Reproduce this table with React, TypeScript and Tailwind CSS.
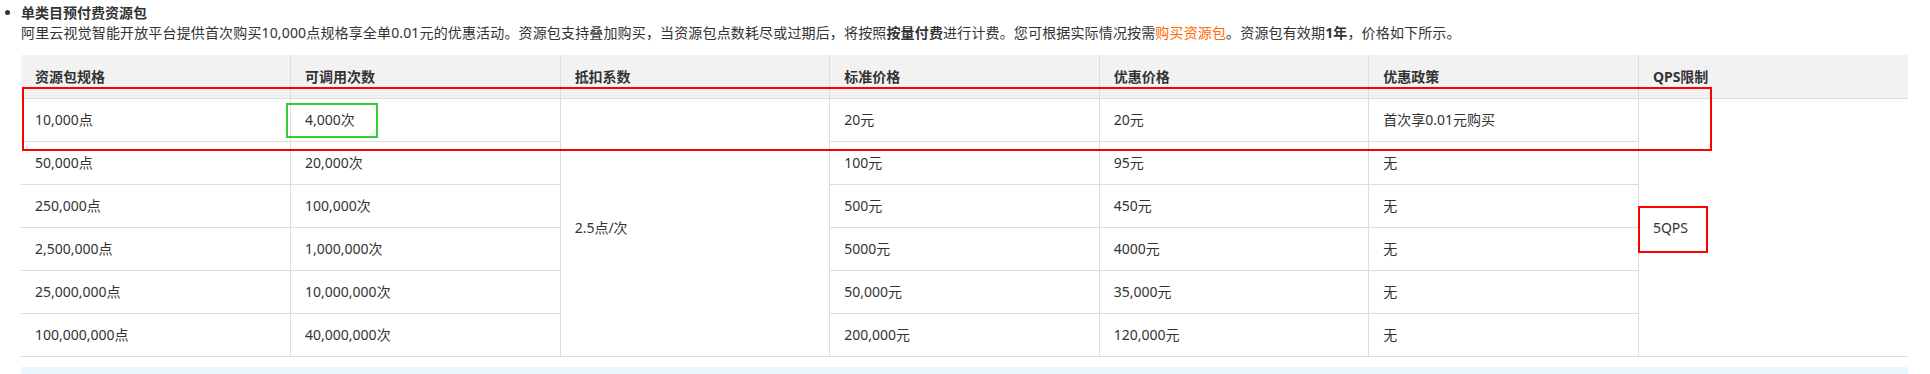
import React from 'react';

type Row = { spec: string; calls: string; price: string; deal: string; policy: string };

const rows: Row[] = [
  { spec: '10,000点', calls: '4,000次', price: '20元', deal: '20元', policy: '首次享0.01元购买' },
  { spec: '50,000点', calls: '20,000次', price: '100元', deal: '95元', policy: '无' },
  { spec: '250,000点', calls: '100,000次', price: '500元', deal: '450元', policy: '无' },
  { spec: '2,500,000点', calls: '1,000,000次', price: '5000元', deal: '4000元', policy: '无' },
  { spec: '25,000,000点', calls: '10,000,000次', price: '50,000元', deal: '35,000元', policy: '无' },
  { spec: '100,000,000点', calls: '40,000,000次', price: '200,000元', deal: '120,000元', policy: '无' },
];

const headers = ['资源包规格', '可调用次数', '抵扣系数', '标准价格', '优惠价格', '优惠政策', 'QPS限制'];

const cell = 'h-[43px] border-b border-r border-[#dddddd] pl-[14px] pr-2 text-left align-middle font-normal';

export default function App() {
  return (
    <div className="relative w-[1930px] h-[374px] overflow-hidden bg-white text-[14px] text-[#333333] font-['Noto_Sans','Noto_Sans_CJK_SC',sans-serif]">
      {/* Heading + description */}
      <div className="pl-[21px] pt-[2px]">
        <div className="relative flex items-center h-[20px] font-bold">
          <span className="absolute left-[-16px] top-[8px] w-[5px] h-[5px] rounded-full bg-[#333333]" />
          单类目预付费资源包
        </div>
        <p className="h-[20px] mt-[1px] leading-[20px] whitespace-nowrap tracking-[0.15px]">
          阿里云视觉智能开放平台提供首次购买10,000点规格享全单0.01元的优惠活动。资源包支持叠加购买，当资源包点数耗尽或过期后，将按照<b>按量付费</b>进行计费。您可根据实际情况按需<span className="text-[#ff6a00]">购买资源包</span>。资源包有效期<b>1年</b>，价格如下所示。
        </p>
      </div>

      {/* Price table */}
      <div className="pl-[21px] pr-[22px] mt-[12px]">
        <table className="w-full table-fixed border-collapse">
          <thead>
            <tr className="bg-[#f2f2f2]">
              {headers.map((h, i) => (
                <th
                  key={h}
                  className={`${cell} font-bold ${i === headers.length - 1 ? 'border-r-0' : ''}`}
                >
                  <span className="font-bold">{h}</span>
                </th>
              ))}
            </tr>
          </thead>
          <tbody>
            {rows.map((r, i) => (
              <tr key={r.spec}>
                <td className={cell}>{r.spec}</td>
                <td className={cell}>{r.calls}</td>
                {i === 0 && (
                  <td rowSpan={6} className={cell}>
                    2.5点/次
                  </td>
                )}
                <td className={cell}>{r.price}</td>
                <td className={cell}>{r.deal}</td>
                <td className={cell}>{r.policy}</td>
                {i === 0 && (
                  <td rowSpan={6} className={`${cell} border-r-0`}>
                    5QPS
                  </td>
                )}
              </tr>
            ))}
          </tbody>
        </table>
        <div className="mt-[10px] h-[8px] bg-[#e8f7fe]" />
      </div>

      {/* Annotation boxes */}
      <div className="absolute left-[22px] top-[87px] w-[1690px] h-[64px] border-2 border-[#ff0000]" />
      <div className="absolute left-[286px] top-[103px] w-[92px] h-[35px] border-2 border-[#33cc33]" />
      <div className="absolute left-[1638px] top-[206px] w-[70px] h-[47px] border-2 border-[#ff0000]" />
    </div>
  );
}
